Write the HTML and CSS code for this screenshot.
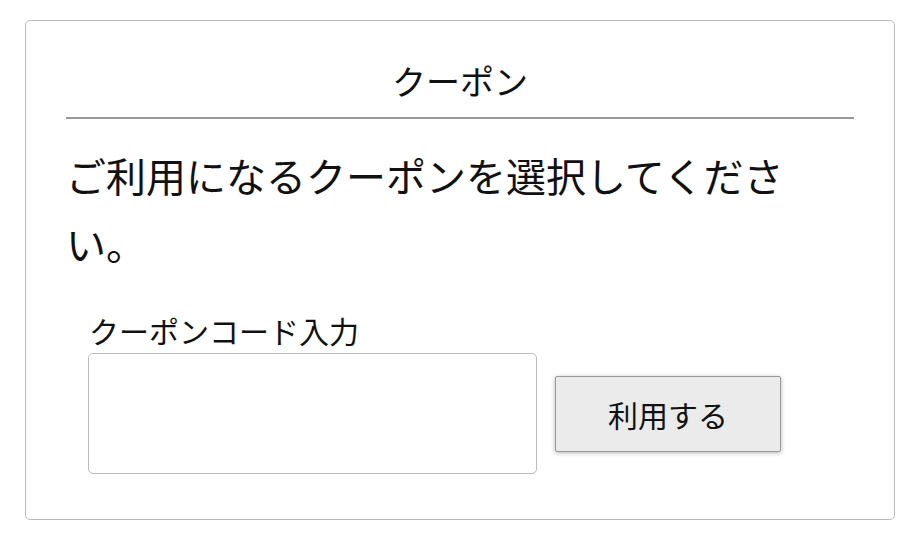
FILE: index.html
```html
<!DOCTYPE html>
<html lang="ja">
<head>
  <meta charset="UTF-8" />
  <meta name="viewport" content="width=device-width, initial-scale=1.0"/>
  <title>クーポン</title>
  <link rel="stylesheet" href="styles.css">
</head>
<body>
  <div class="card">
    <h1 class="card-title">クーポン</h1>
    <p class="lead">ご利用になるクーポンを選択してください。</p>

    <div class="coupon-form">
      <label for="couponCode">クーポンコード入力</label>
      <div class="row">
        <input type="text" id="couponCode">
        <button type="button">利用する</button>
      </div>
    </div>
  </div>
</body>
</html>
```

FILE: styles.css
```css
body {
  margin: 0;
  font-family: "Noto Sans CJK JP", "Noto Sans", sans-serif;
  background: #fff;
  color: #111;
}
.card {
  box-sizing: border-box;
  margin: 20px 25px;
  width: 870px;
  height: 500px;
  padding: 35px 40px 0;
  border: 1px solid #bbb;
  border-radius: 5px;
}
.card-title {
  margin: 0;
  padding-bottom: 12px;
  border-bottom: 2px solid #999;
  font-size: 34px;
  font-weight: normal;
  line-height: 49px;
  text-align: center;
}
.lead {
  margin: 22px 0 0;
  max-width: 750px;
  font-size: 40px;
  line-height: 68px;
}
.coupon-form {
  margin-top: 32px;
  padding-left: 22px;
}
.coupon-form label {
  display: block;
  font-size: 30px;
  line-height: 42px;
  margin-bottom: 2px;
  padding-left: 1px;
}
.row {
  display: flex;
  align-items: center;
  gap: 18px;
}
.row input {
  box-sizing: border-box;
  width: 449px;
  height: 121px;
  border: 1px solid #bbb;
  border-radius: 5px;
  font-size: 28px;
  padding: 0 12px;
}
.row button {
  box-sizing: border-box;
  width: 226px;
  height: 76px;
  background: #ebebeb;
  border: 1px solid #999;
  border-radius: 2px;
  box-shadow: 0 1px 4px rgba(0,0,0,0.3);
  font-family: inherit;
  font-size: 30px;
  color: #111;
}
```
